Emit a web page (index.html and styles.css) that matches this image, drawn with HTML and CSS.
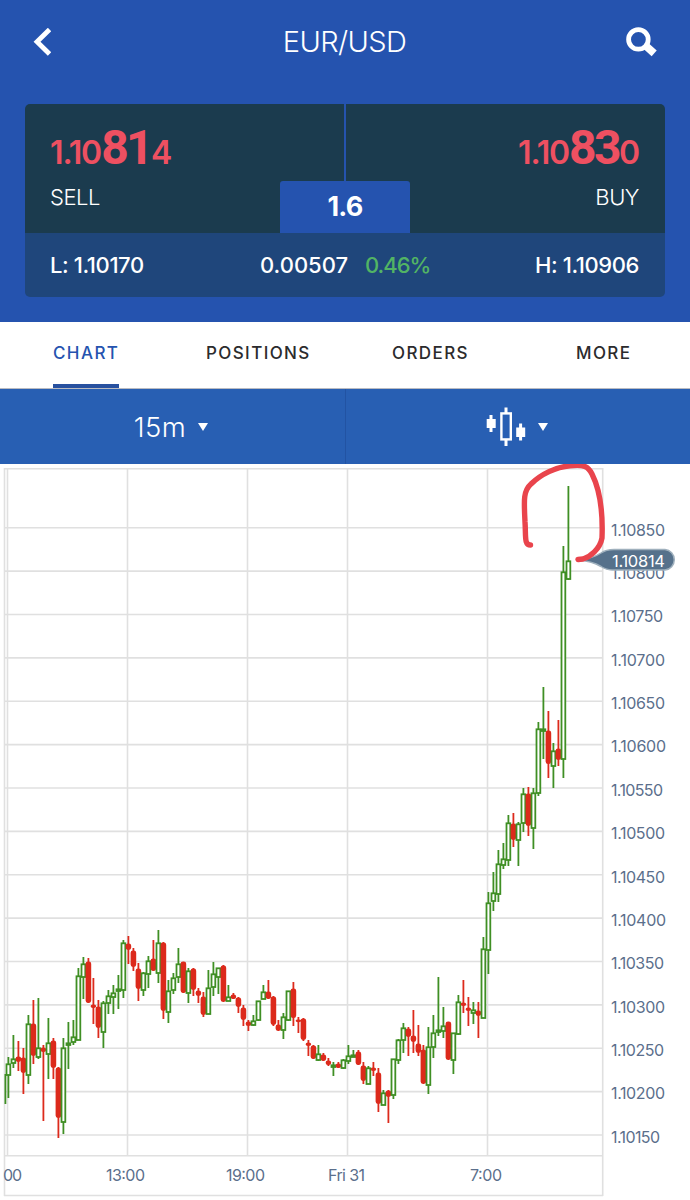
FILE: index.html
```html
<!DOCTYPE html>
<html lang="en">
<head>
    <meta charset="utf-8">
    <title>EUR/USD</title>
    <link rel="stylesheet" href="styles.css">
</head>
<body>
    <header class="header">
        <div class="title-bar">
            <svg class="back-icon" width="18" height="28" viewBox="0 0 18 28">
                <path d="M16.5 1.5 L4 13.7 L16.5 26" />
            </svg>
            <h1>EUR/USD</h1>
            <svg class="search-icon" width="32" height="30" viewBox="0 0 32 30">
                <circle cx="12.4" cy="12.4" r="9.8" />
                <path d="M19 18.2 L28.2 26.4" />
            </svg>
        </div>

        <div class="quote">
            <div class="prices">
                <div class="side sell">
                    <div class="price">1.10<b>81</b>4</div>
                    <div class="side-label">SELL</div>
                </div>
                <div class="side buy">
                    <div class="price">1.10<b>83</b>0</div>
                    <div class="side-label">BUY</div>
                </div>
                <div class="spread">1.6</div>
            </div>
            <div class="stats">
                <span class="low">L: 1.10170</span>
                <span class="change">0.00507</span>
                <span class="percent">0.46%</span>
                <span class="high">H: 1.10906</span>
            </div>
        </div>
    </header>

    <nav class="tabs">
        <a class="tab active">CHART</a>
        <a class="tab">POSITIONS</a>
        <a class="tab">ORDERS</a>
        <a class="tab">MORE</a>
    </nav>

    <div class="toolbar">
        <div class="tool">
            <span class="interval">15m</span>
            <i class="caret"></i>
        </div>
        <div class="tool">
            <svg class="candle-icon" width="40" height="40" viewBox="0 0 40 40">
                <path class="stick" d="M5 8v17M20 0.5v6M20 33v6M34.6 16.5v17" />
                <rect x="0.7" y="12" width="9" height="9" />
                <rect class="hollow" x="15.4" y="6.4" width="9.4" height="26" />
                <rect x="30.2" y="20.5" width="9" height="9.5" />
            </svg>
            <i class="caret"></i>
        </div>
    </div>

    <svg class="chart" id="chart" width="690" height="736" viewBox="0 464 690 736">
        <g id="grid"></g>
        <g id="candles"></g>
        <g id="labels"></g>
        <path class="tag" d="M577 560 Q592 559 601 553 Q606 549.5 614 549.5 H665 A10.3 10.3 0 0 1 665 570 H614 Q606 570 601 566.5 Q592 561 577 560 Z" />
        <text class="tag-text" x="612" y="566.5" textLength="53">1.10814</text>
        <path class="marker" d="M530.5 545 C524 545 526 536 525 522 C524 501 523 491 531 484 C541 474 556 467 570 465.8 C584 464.5 588 466 592 474 C600 490 603 512 602 538 C600 549 590 557 583 559 L578 559.5" />
    </svg>

    <script src="chart.js"></script>
</body>
</html>
```

FILE: styles.css
```css
body {
    margin: 0;
    width: 690px;
    font-family: Inter, "Open Sans", sans-serif;
    background-color: #fff;
    color: #fff;
}

.header {
    height: 322px;
    box-sizing: border-box;
    padding: 0 25px;
    background-color: #2553af;
}

.title-bar {
    display: flex;
    justify-content: space-between;
    align-items: center;
    height: 83px;
    margin-bottom: 21px;
    padding: 0 7px 0 8px;
}

.title-bar h1 {
    margin: 0 0 0 12px;
    font-size: 29px;
    font-weight: 300;
    letter-spacing: -0.6px;
}

.back-icon,
.search-icon {
    fill: none;
    stroke: #fff;
    stroke-width: 4.8;
}

.search-icon path {
    stroke-width: 7.6;
}

.quote {
    border-radius: 5px;
    overflow: hidden;
}

.prices {
    display: grid;
    grid-template-columns: 1fr 1fr;
    column-gap: 2px;
    position: relative;
    height: 129px;
}

.side {
    box-sizing: border-box;
    padding: 16px 25px 0;
    background-color: #1b3b4e;
}

.buy {
    padding-right: 26px;
    text-align: right;
}

.price {
    height: 56px;
    line-height: 56px;
    font-size: 32px;
    font-weight: 600;
    letter-spacing: -1.1px;
    color: #ee5061;
}

.price b {
    font-family: Roboto, sans-serif;
    font-size: 48px;
    font-weight: 700;
    letter-spacing: -2.6px;
}

.side-label {
    margin-top: 8px;
    line-height: 27px;
    font-size: 22px;
    font-weight: 300;
    letter-spacing: -0.5px;
}

.spread {
    position: absolute;
    left: 255px;
    bottom: 0;
    width: 130px;
    height: 52px;
    line-height: 51px;
    border-radius: 3px 3px 0 0;
    background-color: #2553af;
    text-align: center;
    font-size: 27px;
    font-weight: 700;
    letter-spacing: -0.8px;
}

.stats {
    display: flex;
    height: 64px;
    line-height: 64px;
    padding: 0 26px 0 25px;
    background-color: #1f467b;
    font-size: 22px;
    font-weight: 500;
    letter-spacing: -0.4px;
}

.low {
    width: 210px;
}

.change {
    width: 105px;
    letter-spacing: 0;
}

.percent {
    color: #52b464;
    letter-spacing: -1px;
}

.high {
    margin-left: auto;
}

.tabs {
    display: grid;
    grid-template-columns: 153px 186px 184px 1fr;
    height: 66px;
    box-sizing: border-box;
    margin-top: 1px;
    padding-left: 53px;
    border-bottom: 1px solid #b9bbc2;
}

.tab {
    line-height: 60px;
    color: #2b2b2d;
    font-size: 17px;
    font-weight: 500;
    letter-spacing: 1.4px;
}

.active {
    width: 66px;
    box-sizing: border-box;
    height: 65px;
    border-bottom: 4px solid #28519f;
    color: #2553af;
}

.toolbar {
    display: grid;
    grid-template-columns: 1fr 1fr;
    height: 75px;
    background-color: #285fb3;
}

.tool {
    display: flex;
    justify-content: center;
    align-items: center;
    gap: 12px;
    padding-right: 3px;
}

.tool + .tool {
    border-left: 1px solid #2253a3;
}

.interval {
    margin-top: 1px;
    font-size: 27.5px;
    font-weight: 300;
    letter-spacing: 0.4px;
}

.caret {
    border: 5.5px solid transparent;
    border-top: 8px solid #fff;
    border-bottom: 0;
}

.candle-icon {
    fill: #fff;
}

.candle-icon .stick {
    stroke: #fff;
    stroke-width: 3;
}

.candle-icon .hollow {
    fill: none;
    stroke: #fff;
    stroke-width: 2.4;
}

.chart {
    display: block;
}

.grid-line {
    stroke: #e0e0e0;
    stroke-width: 1.6;
}

.up {
    fill: #fff;
    stroke: #3f8f24;
    stroke-width: 1.8;
}

.down {
    fill: #dc2a1c;
    stroke: #dc2a1c;
    stroke-width: 1.8;
}

.axis-label {
    fill: #5b6f8c;
    font-size: 16px;
    font-weight: 400;
}

.tag {
    fill: #56718b;
    stroke: #9fb0bd;
    stroke-width: 1.5;
}

.tag-text {
    fill: #fff;
    font-size: 16.5px;
    font-weight: 400;
}

.marker {
    fill: none;
    stroke: #e9444c;
    stroke-width: 5.4;
    stroke-linecap: round;
    stroke-linejoin: round;
}
```

FILE: chart.js
```javascript
// direction, wick top, body top, body bottom, wick bottom
const candles = [
    ['up', 1057, 1064, 1075, 1098], ['up', 1035, 1059, 1063, 1068], ['down', 1041, 1057, 1061, 1071],
    ['down', 1048, 1058, 1072, 1094], ['up', 1015, 1024, 1075, 1084], ['down', 1000, 1024, 1055, 1064],
    ['up', 998, 1048, 1057, 1059], ['down', 1045, 1048, 1051, 1121], ['up', 1018, 1043, 1054, 1079],
    ['down', 1038, 1041, 1067, 1079], ['down', 1067, 1068, 1117, 1138], ['up', 1038, 1048, 1122, 1134],
    ['up', 1022, 1043, 1045, 1069], ['up', 1020, 1037, 1042, 1045], ['up', 968, 976, 1040, 1040],
    ['up', 957, 964, 977, 999], ['down', 958, 962, 1002, 1003], ['down', 978, 1005, 1007, 1024],
    ['down', 1000, 1007, 1027, 1038], ['up', 1001, 1003, 1032, 1048], ['up', 990, 996, 1003, 1014],
    ['up', 985, 993, 997, 1014], ['up', 975, 989, 991, 1009], ['up', 940, 943, 990, 998],
    ['down', 936, 944, 949, 964], ['down', 948, 951, 966, 971], ['down', 963, 969, 988, 1001],
    ['up', 972, 973, 990, 996], ['up', 956, 961, 974, 988], ['down', 940, 959, 970, 971],
    ['up', 930, 943, 973, 983], ['down', 942, 943, 1010, 1019], ['up', 980, 991, 1012, 1023],
    ['up', 973, 978, 990, 994], ['up', 948, 964, 977, 983], ['down', 962, 962, 992, 993],
    ['up', 968, 971, 993, 1003], ['down', 968, 969, 989, 996], ['down', 988, 991, 995, 1003],
    ['down', 992, 997, 1014, 1017], ['up', 970, 988, 1014, 1014], ['up', 962, 974, 987, 996],
    ['up', 968, 968, 977, 994], ['down', 965, 966, 1001, 1001], ['up', 985, 997, 1001, 1001],
    ['down', 993, 995, 998, 999], ['down', 997, 998, 1006, 1013], ['down', 1005, 1008, 1019, 1026],
    ['down', 1020, 1022, 1025, 1031], ['up', 1015, 1021, 1025, 1026], ['up', 1001, 1001, 1020, 1021],
    ['up', 985, 992, 999, 999], ['down', 980, 992, 998, 999], ['down', 996, 997, 1024, 1026],
    ['down', 1020, 1025, 1030, 1030], ['up', 1013, 1017, 1030, 1039], ['up', 991, 991, 1020, 1021],
    ['down', 982, 989, 1017, 1026], ['down', 1017, 1020, 1021, 1033], ['down', 1018, 1019, 1039, 1041],
    ['down', 1040, 1043, 1045, 1056], ['down', 1045, 1046, 1058, 1059], ['up', 1045, 1054, 1060, 1061],
    ['down', 1053, 1055, 1060, 1061], ['down', 1058, 1061, 1064, 1066], ['up', 1062, 1065, 1067, 1076],
    ['down', 1062, 1064, 1067, 1068], ['up', 1059, 1060, 1068, 1069], ['up', 1045, 1056, 1061, 1064],
    ['up', 1050, 1055, 1057, 1057], ['down', 1050, 1052, 1064, 1065], ['down', 1062, 1066, 1080, 1084],
    ['up', 1066, 1068, 1084, 1084], ['down', 1062, 1068, 1070, 1076], ['down', 1068, 1073, 1103, 1112],
    ['up', 1090, 1093, 1105, 1105], ['down', 1090, 1091, 1096, 1123], ['up', 1059, 1059, 1095, 1099],
    ['up', 1039, 1040, 1060, 1064], ['up', 1023, 1028, 1040, 1053], ['down', 1027, 1029, 1036, 1056],
    ['down', 1010, 1036, 1041, 1053], ['down', 1025, 1044, 1052, 1056], ['down', 1045, 1050, 1083, 1083],
    ['up', 1027, 1047, 1085, 1094], ['up', 1015, 1033, 1047, 1058], ['up', 977, 1030, 1032, 1036],
    ['up', 1007, 1026, 1031, 1038], ['down', 1022, 1022, 1059, 1059], ['up', 1033, 1033, 1060, 1074],
    ['up', 995, 1002, 1034, 1035], ['down', 980, 1003, 1005, 1013], ['down', 997, 1008, 1010, 1026],
    ['up', 1002, 1010, 1013, 1024], ['down', 1002, 1011, 1015, 1038], ['up', 937, 949, 1018, 1018],
    ['up', 892, 903, 950, 974], ['up', 872, 893, 901, 911], ['up', 850, 864, 894, 902],
    ['up', 843, 859, 865, 869], ['up', 815, 823, 860, 866], ['down', 813, 824, 839, 847],
    ['up', 822, 824, 840, 866], ['up', 788, 794, 823, 832], ['down', 787, 794, 825, 836],
    ['up', 788, 793, 828, 849], ['up', 722, 729, 793, 796], ['up', 687, 729, 731, 759],
    ['down', 711, 731, 763, 778], ['up', 743, 751, 766, 788], ['down', 720, 749, 759, 766],
    ['up', 546, 572, 759, 778], ['up', 486, 561, 579, 580]
];

// label text, width
const prices = [
    ['1.10850', 54], ['1.10800', 54], ['1.10750', 52], ['1.10700', 54], ['1.10650', 54],
    ['1.10600', 55], ['1.10550', 52], ['1.10500', 54], ['1.10450', 54], ['1.10400', 55],
    ['1.10350', 53], ['1.10300', 54], ['1.10250', 53], ['1.10200', 54], ['1.10150', 49]
];

const times = [['00', 3, 19], ['13:00', 106, 39], ['19:00', 226, 39], ['Fri 31', 328, 37], ['7:00', 470, 32]];

let grid = '';
let bars = '';
let labels = '';

function line(x1, y1, x2, y2) {
    grid += `<line class="grid-line" x1="${x1}" y1="${y1}" x2="${x2}" y2="${y2}" />`;
}

// frame
line(4, 468.7, 603, 468.7);
line(4.5, 468, 4.5, 1196);
line(4, 1155.7, 603, 1155.7);
line(4, 1195.5, 603, 1195.5);
line(602.7, 468, 602.7, 1196);

[7.5, 127.5, 247.5, 347.5, 487.5].forEach(x => line(x, 468, x, 1155));

prices.forEach(([text, width], i) => {
    const y = 527.8 + i * 43.37;
    line(4, y, 603, y);
    labels += `<text class="axis-label" x="611" y="${y + 7.8}" textLength="${width}">${text}</text>`;
});

times.forEach(([text, x, width]) => {
    labels += `<text class="axis-label" x="${x}" y="1181" textLength="${width}">${text}</text>`;
});

bars += '<line class="up" x1="5.4" y1="1074" x2="5.4" y2="1104" />';
candles.forEach(([dir, high, top, bottom, low], i) => {
    const x = 8.4 + i * 5;
    const round = dir === 'down' ? 1.5 : 0;
    bars += `<line class="${dir}" x1="${x}" y1="${high}" x2="${x}" y2="${low}" />`;
    bars += `<rect class="${dir}" x="${x - 1.9}" y="${top + 0.3}" width="3.8" height="${Math.max(bottom - top - 0.3, 1)}" rx="${round}" />`;
});

document.getElementById('grid').innerHTML = grid;
document.getElementById('candles').innerHTML = bars;
document.getElementById('labels').innerHTML = labels;
```
